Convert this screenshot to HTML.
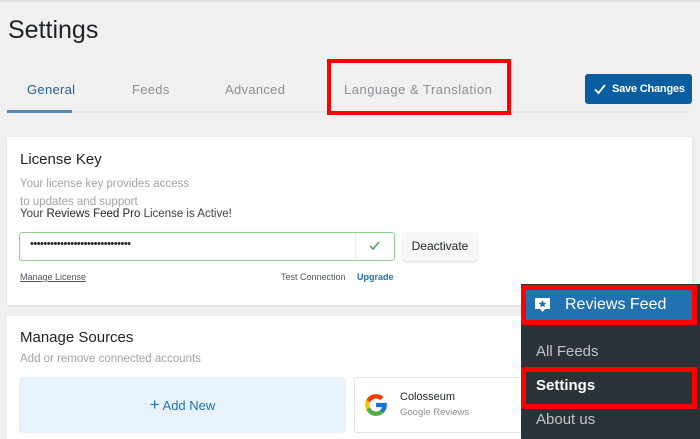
<!DOCTYPE html>
<html><head><style>
*{box-sizing:border-box;margin:0;padding:0}
html,body{width:700px;height:439px;overflow:hidden}
body{background:#f0f0f1;font-family:"Liberation Sans",sans-serif;position:relative;color:#1d2327}
.a{position:absolute;white-space:nowrap}
</style></head><body>
<div class="a" style="left:0;top:0;width:700px;height:2px;background:#e0e0e0"></div>
<div class="a" style="left:8px;top:16px;font-size:25px;color:#1d2327">Settings</div>
<div class="a" style="left:7px;top:111px;width:683px;height:2px;background:#e2e4e7"></div>
<div class="a" style="left:7px;top:110px;width:65px;height:3px;background:#5b86b8"></div>
<div class="a" style="left:27px;top:82px;font-size:13px;color:#2c5f95;letter-spacing:.3px">General</div>
<div class="a" style="left:132px;top:82px;font-size:13px;color:#8c8f94;letter-spacing:.3px">Feeds</div>
<div class="a" style="left:225px;top:82px;font-size:13px;color:#8c8f94;letter-spacing:.3px">Advanced</div>
<div class="a" style="left:344px;top:82px;font-size:13px;color:#8c8f94;letter-spacing:.5px">Language &amp; Translation</div>
<div class="a" style="left:327px;top:59px;width:184px;height:56px;border:4px solid #f00"></div>
<div class="a" style="left:585px;top:74px;width:107px;height:30px;background:#0a5ea0;border-radius:3px;color:#fff;font-size:11px;font-weight:bold;line-height:30px;padding-left:27px;letter-spacing:-.2px">Save Changes
<svg class="a" style="left:9px;top:9px" width="12" height="12" viewBox="0 0 12 12"><path d="M1 6.5l3.5 3.5L11 2" stroke="#fff" stroke-width="1.8" fill="none"/></svg></div>

<div class="a" style="left:7px;top:137px;width:685px;height:168px;background:#fff;box-shadow:0 1px 2px rgba(0,0,0,.1)"></div>
<div class="a" style="left:20px;top:151px;font-size:15px">License Key</div>
<div class="a" style="left:20px;top:175px;font-size:11.5px;color:#a0a3a8;line-height:18px">Your license key provides access<br>to updates and support</div>
<div class="a" style="left:20px;top:208px;font-size:11.5px;color:#3c434a">Your <span style="color:#1d2327">Reviews Feed Pro</span> License is Active!</div>
<div class="a" style="left:19px;top:232px;width:376px;height:29px;border:1px solid #8fcf8f;border-radius:3px;background:#fff"></div>
<div class="a" style="left:355px;top:233px;width:1px;height:27px;background:#eee"></div>
<div class="a" style="left:30px;top:238px;font-size:11px;letter-spacing:-.5px">••••••••••••••••••••••••••••••</div>
<svg class="a" style="left:369px;top:241px" width="11" height="10" viewBox="0 0 11 10"><path d="M1 5l3 3 6-7" stroke="#3ea04a" stroke-width="1.5" fill="none"/></svg>
<div class="a" style="left:403px;top:232px;width:74px;height:29px;background:#f6f7f7;border-radius:3px;box-shadow:0 1px 2px rgba(0,0,0,.15);font-size:12px;line-height:29px;text-align:center">Deactivate</div>
<div class="a" style="left:20px;top:272px;font-size:9px;color:#50575e;text-decoration:underline">Manage License</div>
<div class="a" style="left:281px;top:272px;font-size:9px;color:#50575e">Test Connection</div>
<div class="a" style="left:357px;top:272px;font-size:9px;color:#2271b1;font-weight:bold">Upgrade</div>

<div class="a" style="left:7px;top:316px;width:685px;height:123px;background:#fff"></div>
<div class="a" style="left:20px;top:329px;font-size:15px">Manage Sources</div>
<div class="a" style="left:20px;top:353px;font-size:11.5px;color:#a0a3a8">Add or remove connected accounts</div>
<div class="a" style="left:19px;top:377px;width:327px;height:56px;background:#e8f2fc;border-radius:3px;color:#2271b1;font-size:13px;line-height:56px;text-align:center"><span style="font-size:17px">+</span> Add New</div>
<div class="a" style="left:354px;top:377px;width:180px;height:56px;border:1px solid #e4e4e4;border-radius:3px"></div>
<svg class="a" style="left:363px;top:392px" width="26" height="26" viewBox="0 0 48 48"><path fill="#FFC107" d="M43.6 20H24v8h11.3C33.7 33 29.3 36 24 36c-6.6 0-12-5.4-12-12s5.4-12 12-12c3 0 5.8 1.1 7.9 3l5.7-5.7C34 6 29.3 4 24 4 13 4 4 13 4 24s9 20 20 20 20-9 20-20c0-1.300-.1-2.700-.4-4z"/><path fill="#FF3D00" d="M6.3 14.7l6.6 4.8C14.7 15.1 19 12 24 12c3 0 5.8 1.1 7.9 3l5.7-5.7C34 6 29.3 4 24 4 16.3 4 9.7 8.3 6.3 14.7z"/><path fill="#4CAF50" d="M24 44c5.2 0 9.9-2 13.4-5.2l-6.2-5.2C29.2 35.1 26.7 36 24 36c-5.2 0-9.6-3.3-11.3-8l-6.5 5C9.5 39.6 16.2 44 24 44z"/><path fill="#1976D2" d="M43.6 20H24v8h11.3c-.8 2.2-2.2 4.2-4.1 5.6l6.2 5.2C37 39.2 44 34 44 24c0-1.3-.1-2.7-.4-4z"/></svg>
<div class="a" style="left:400px;top:391px;font-size:11px;color:#1d2327">Colosseum</div>
<div class="a" style="left:400px;top:407px;font-size:9.5px;color:#8c8f94">Google Reviews</div>

<div class="a" style="left:521px;top:284px;width:179px;height:155px;background:#2c3338"></div>
<div class="a" style="left:521px;top:285px;width:176px;height:40px;border:5px solid #f00;background:#2271b1"></div>
<svg class="a" style="left:534px;top:297px" width="17" height="18" viewBox="0 0 17 18"><path d="M1 1h15v11h-5l-2.5 3-2.5-3H1z" fill="#fff"/><path d="M8.5 3.2l1.2 2.4 2.6.3-1.9 1.8.5 2.6-2.4-1.3-2.4 1.3.5-2.6-1.9-1.8 2.6-.3z" fill="#2271b1"/></svg>
<div class="a" style="left:565px;top:296px;font-size:16px;color:#fff">Reviews Feed</div>
<div class="a" style="left:536px;top:343px;font-size:15px;color:#c3c4c7">All Feeds</div>
<div class="a" style="left:521px;top:367px;width:176px;height:42px;border:5px solid #f00"></div>
<div class="a" style="left:536px;top:377px;font-size:15px;color:#fff;font-weight:bold">Settings</div>
<div class="a" style="left:536px;top:411px;font-size:15px;color:#c3c4c7">About us</div>
</body></html>
